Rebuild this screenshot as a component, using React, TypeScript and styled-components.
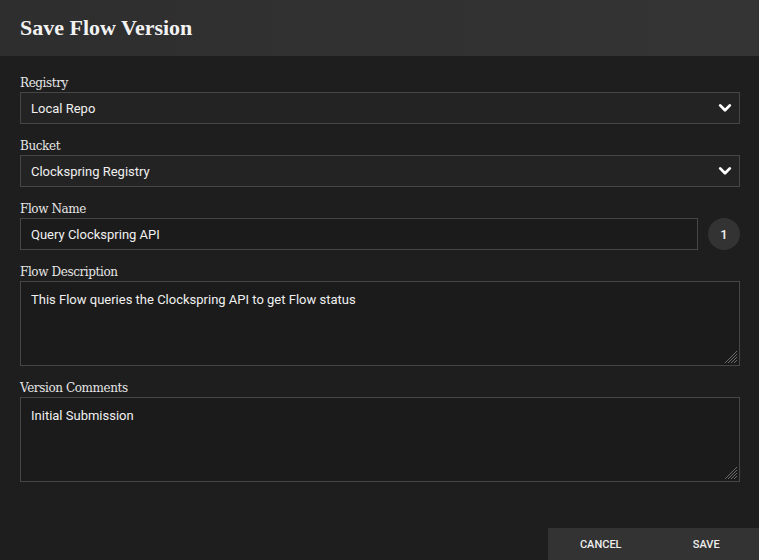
import styled, { createGlobalStyle } from "styled-components";

const Global = createGlobalStyle`
    html, body {
        margin: 0;
        padding: 0;
        background-color: #1e1e1e;
    }
    * {
        box-sizing: border-box;
    }
`;

const Dialog = styled.div`
    width: 759px;
    height: 560px;
    display: flex;
    flex-direction: column;
    background-color: #1e1e1e;
    overflow: hidden;
`;

const Header = styled.div`
    height: 56px;
    flex-shrink: 0;
    display: flex;
    align-items: center;
    padding: 0 20px;
    background: linear-gradient(to right, #2e2e2e, #343434);
`;

const Title = styled.h1`
    margin: 0;
    font-family: "Liberation Serif", "Times New Roman", serif;
    font-weight: 700;
    font-size: 22px;
    color: #f2f2f2;
`;

const Body = styled.div`
    flex: 1;
    padding: 20px 19px 0 20px;
    display: flex;
    flex-direction: column;
    gap: 15px;
`;

const Field = styled.div`
    display: flex;
    flex-direction: column;
`;

const Label = styled.label`
    height: 16px;
    line-height: 14px;
    font-family: "DejaVu Serif", "Liberation Serif", serif;
    font-size: 12px;
    letter-spacing: -0.4px;
    color: #e6e6e6;
`;

const Row = styled.div`
    display: flex;
    align-items: center;
    gap: 10px;
`;

const SelectBox = styled.div`
    height: 32px;
    display: flex;
    align-items: center;
    justify-content: space-between;
    padding: 0 7px 0 10px;
    background-color: #232323;
    border: 1px solid #464646;
    font-family: Roboto, "Liberation Sans", sans-serif;
    font-size: 13px;
    color: #f0f0f0;
`;

const TextInput = styled.div`
    flex: 1;
    height: 32px;
    display: flex;
    align-items: center;
    padding: 0 10px;
    background-color: #1b1b1b;
    border: 1px solid #464646;
    font-family: Roboto, "Liberation Sans", sans-serif;
    font-size: 13px;
    color: #f0f0f0;
`;

const TextArea = styled.div`
    position: relative;
    height: 85px;
    padding: 10px 10px;
    background-color: #1b1b1b;
    border: 1px solid #464646;
    font-family: Roboto, "Liberation Sans", sans-serif;
    font-size: 13px;
    line-height: 16px;
    color: #f0f0f0;
`;

const Grip = styled.svg`
    position: absolute;
    right: 1px;
    bottom: 1px;
`;

const Badge = styled.div`
    width: 32px;
    height: 32px;
    border-radius: 50%;
    display: flex;
    align-items: center;
    justify-content: center;
    background-color: #333333;
    font-family: Roboto, "Liberation Sans", sans-serif;
    font-weight: 500;
    font-size: 13px;
    color: #f0f0f0;
`;

const Footer = styled.div`
    display: flex;
    justify-content: flex-end;
`;

const Actions = styled.div`
    width: 211px;
    height: 32px;
    display: flex;
    background-color: #333333;
`;

const ActionButton = styled.button`
    flex: 1;
    border: none;
    background: transparent;
    font-family: Roboto, "Liberation Sans", sans-serif;
    font-weight: 500;
    font-size: 11px;
    color: #eeeeee;
    cursor: pointer;
    padding: 0;
`;

const Chevron = () => (
    <svg width="14" height="14" viewBox="0 0 16 16">
        <path d="M2.5 5 L8 10.5 L13.5 5" fill="none" stroke="#ffffff" strokeWidth="3.2" strokeLinecap="round" strokeLinejoin="round" />
    </svg>
);

const ResizeGrip = () => (
    <Grip width="14" height="14" viewBox="0 0 14 14">
        <path d="M13 1 L1 13 M13 4 L4 13 M13 7 L7 13 M13 10 L10 13" stroke="#6a6a6a" strokeWidth="1" />
    </Grip>
);

function App() {
    return (
        <>
            <Global />
            <Dialog>
                <Header>
                    <Title>Save Flow Version</Title>
                </Header>
                <Body>
                    <Field>
                        <Label>Registry</Label>
                        <SelectBox>
                            Local Repo
                            <Chevron />
                        </SelectBox>
                    </Field>
                    <Field>
                        <Label>Bucket</Label>
                        <SelectBox>
                            Clockspring Registry
                            <Chevron />
                        </SelectBox>
                    </Field>
                    <Field>
                        <Label>Flow Name</Label>
                        <Row>
                            <TextInput>Query Clockspring API</TextInput>
                            <Badge>1</Badge>
                        </Row>
                    </Field>
                    <Field>
                        <Label>Flow Description</Label>
                        <TextArea>
                            This Flow queries the Clockspring API to get Flow status
                            <ResizeGrip />
                        </TextArea>
                    </Field>
                    <Field>
                        <Label>Version Comments</Label>
                        <TextArea>
                            Initial Submission
                            <ResizeGrip />
                        </TextArea>
                    </Field>
                </Body>
                <Footer>
                    <Actions>
                        <ActionButton>CANCEL</ActionButton>
                        <ActionButton>SAVE</ActionButton>
                    </Actions>
                </Footer>
            </Dialog>
        </>
    );
}

export default App;
